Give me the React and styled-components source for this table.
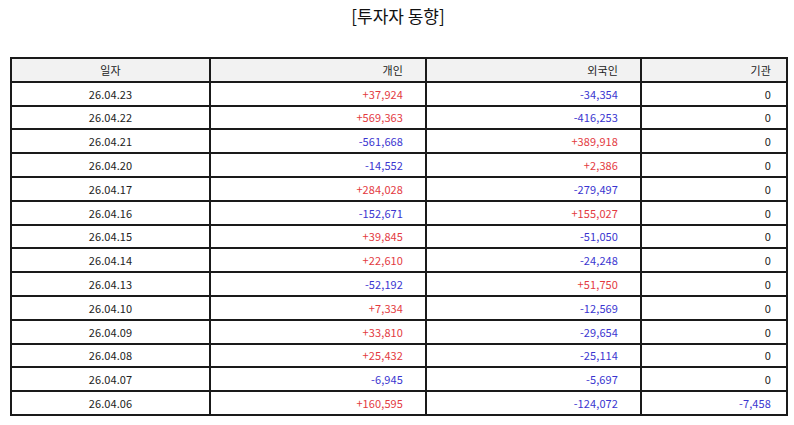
import React from "react";
import styled, { createGlobalStyle } from "styled-components";

const Global = createGlobalStyle`
  html, body { margin: 0; padding: 0; background: #fff; }
  body { font-family: "Noto Sans CJK KR", "Noto Sans", sans-serif; color: #222; }
`;

const Page = styled.div`
  width: 794px;
  padding: 0 8px 0 10px;
  box-sizing: border-box;
`;

const Title = styled.h1`
  margin: 0;
  height: 57px;
  padding-top: 4px;
  box-sizing: border-box;
  text-align: center;
  font-size: 17px;
  font-weight: 400;
  line-height: 24px;
  color: #111;
`;

const Table = styled.table`
  width: 776px;
  border-collapse: collapse;
  table-layout: fixed;
  font-size: 11px;
`;

const Cell = styled.td`
  border: 2px solid #1a1a1a;
  height: 21.8px;
  padding: 0 ${(p) => p.$pr}px 0 0;
  text-align: ${(p) => p.$align};
  color: ${(p) => p.$color || "#222"};
  line-height: 14px;
  letter-spacing: 0.1px;
  white-space: nowrap;
`;

const HeadCell = styled(Cell).attrs({ as: "th" })`
  font-weight: 400;
  color: #222;
`;

const HeadRow = styled.tr`
  background: #f2f2f2;
`;

const cols = [
  { w: 199, align: "center", pr: 0 },
  { w: 216, align: "right", pr: 22 },
  { w: 215, align: "right", pr: 22 },
  { w: 146, align: "right", pr: 15 },
];

const data = [
  ["26.04.23", "+37,924", "-34,354", "0"],
  ["26.04.22", "+569,363", "-416,253", "0"],
  ["26.04.21", "-561,668", "+389,918", "0"],
  ["26.04.20", "-14,552", "+2,386", "0"],
  ["26.04.17", "+284,028", "-279,497", "0"],
  ["26.04.16", "-152,671", "+155,027", "0"],
  ["26.04.15", "+39,845", "-51,050", "0"],
  ["26.04.14", "+22,610", "-24,248", "0"],
  ["26.04.13", "-52,192", "+51,750", "0"],
  ["26.04.10", "+7,334", "-12,569", "0"],
  ["26.04.09", "+33,810", "-29,654", "0"],
  ["26.04.08", "+25,432", "-25,114", "0"],
  ["26.04.07", "-6,945", "-5,697", "0"],
  ["26.04.06", "+160,595", "-124,072", "-7,458"],
];

const colorOf = (v) =>
  v.startsWith("+") ? "#e33a3f" : v.startsWith("-") ? "#3a35d0" : "#222";

export default function App() {
  return (
    <Page>
      <Global />
      <Title>[투자자 동향]</Title>
      <Table>
        <colgroup>
          {cols.map((c, i) => (
            <col key={i} style={{ width: c.w }} />
          ))}
        </colgroup>
        <thead>
          <HeadRow>
            {["일자", "개인", "외국인", "기관"].map((h, i) => (
              <HeadCell key={h} $align={cols[i].align} $pr={cols[i].pr}>
                {h}
              </HeadCell>
            ))}
          </HeadRow>
        </thead>
        <tbody>
          {data.map((row) => (
            <tr key={row[0]}>
              {row.map((v, i) => (
                <Cell
                  key={i}
                  $align={cols[i].align}
                  $pr={cols[i].pr}
                  $color={i === 0 ? "#222" : colorOf(v)}
                >
                  {v}
                </Cell>
              ))}
            </tr>
          ))}
        </tbody>
      </Table>
    </Page>
  );
}
